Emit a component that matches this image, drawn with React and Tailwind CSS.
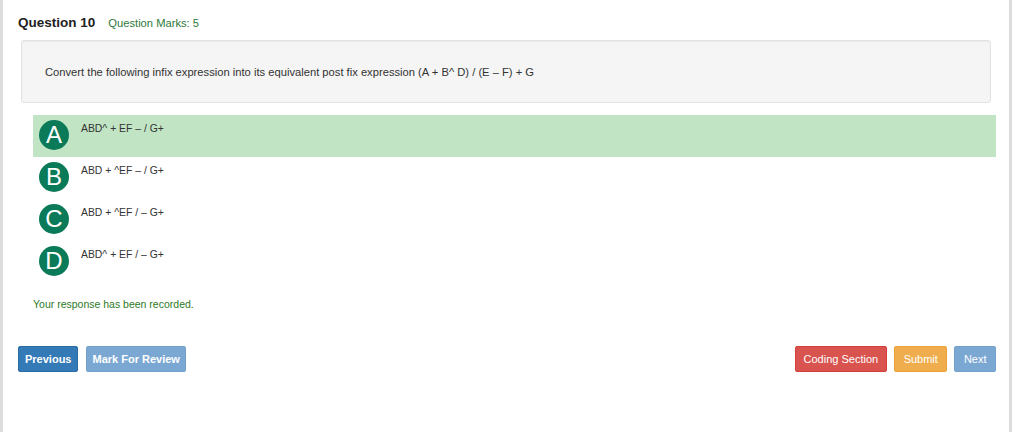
const OPTIONS = [
  { key: 'A', text: 'ABD^ + EF – / G+', selected: true },
  { key: 'B', text: 'ABD + ^EF – / G+' },
  { key: 'C', text: 'ABD + ^EF / – G+' },
  { key: 'D', text: 'ABD^ + EF / – G+' },
]

function Option({ opt }) {
  return (
    <div className={`flex items-start h-[42px] pl-[6px] ${opt.selected ? 'bg-[#c1e5c4]' : ''}`}>
      <div className="mt-[5px] w-[30px] h-[30px] rounded-full bg-[#0a7a58] text-white flex items-center justify-center text-[24px] leading-none">
        {opt.key}
      </div>
      <span className="ml-[12px] mt-[6px] text-[10.4px] text-[#333]">{opt.text}</span>
    </div>
  )
}

export default function App() {
  return (
    <div
      className="w-[1012px] h-[432px] bg-white border-l-[3px] border-r-[3px] border-[#dcdcdc] pl-[15px] pr-[13px] pt-[13px]"
      style={{ fontFamily: '"Liberation Sans", Arial, sans-serif' }}
    >
      <div className="flex items-baseline gap-[13px]">
        <h3 className="text-[13.5px] font-bold text-[#222]">Question 10</h3>
        <span className="text-[11.2px] text-[#2d7a3a]">Question Marks: 5</span>
      </div>

      <div className="mt-[7px] ml-[3px] mr-[5px] h-[63px] bg-[#f5f5f5] border border-[#e3e3e3] rounded-[3px] shadow-[inset_0_1px_1px_rgba(0,0,0,0.05)] flex items-center pl-[23px]">
        <p className="text-[11.2px] text-[#333] pt-[1px]">
          Convert the following infix expression into its equivalent post fix expression (A + B^ D) / (E – F) + G
        </p>
      </div>

      <div className="mt-[12px] ml-[15px]">
        {OPTIONS.map(o => <Option key={o.key} opt={o} />)}
      </div>

      <p className="mt-[14px] ml-[15px] text-[10.5px] text-[#2d7a1f]">Your response has been recorded.</p>

      <div className="mt-[33px] flex items-center">
        <button className="h-[26px] px-[6px] bg-[#337ab7] border border-[#2e6da4] text-white text-[11px] font-bold rounded-[2px]">
          Previous
        </button>
        <button className="ml-[8px] h-[26px] px-[5px] bg-[#7ba7d3] border border-[#74a0cc] text-white text-[11px] font-bold rounded-[2px]">
          Mark For Review
        </button>
        <div className="flex-1" />
        <button className="h-[26px] px-[8px] bg-[#d9534f] border border-[#d43f3a] text-white text-[11px] rounded-[2px]">
          Coding Section
        </button>
        <button className="ml-[7px] h-[26px] px-[8.5px] bg-[#f0ad4e] border border-[#eea236] text-white text-[11px] rounded-[2px]">
          Submit
        </button>
        <button className="ml-[7px] h-[26px] px-[8.5px] bg-[#7ba7d3] border border-[#74a0cc] text-white text-[11px] rounded-[2px]">
          Next
        </button>
      </div>
    </div>
  )
}
